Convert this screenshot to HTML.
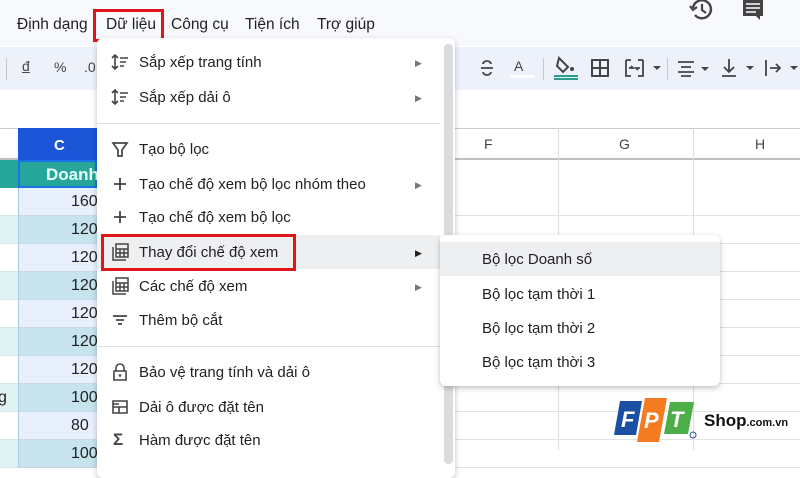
<!DOCTYPE html><html><head><meta charset="utf-8"><style>
*{margin:0;padding:0;box-sizing:border-box}
body{width:800px;height:450px;overflow:hidden;position:relative;background:#fff;font-family:"Liberation Sans",Arial,sans-serif;color:#202124}
.abs{position:absolute}
.menu span{position:absolute;font-size:15.5px}
.row{position:absolute;left:0;width:800px;height:28px;border-bottom:1px solid #e2e2e2}
.it{position:absolute;left:139px;font-size:15px;color:#202124}
.ic{position:absolute;left:111px;width:18px;height:18px}
.arr{position:absolute;left:415px;font-size:9px;color:#777}
.sub{position:absolute;left:482px;font-size:15px}
</style></head><body>
<div class="abs" style="left:0;top:0;width:800px;height:46px;background:#f8f9fc"></div>
<div class="menu">
<span style="left:17px;top:16px">Định dạng</span>
<span style="left:106px;top:16px">Dữ liệu</span>
<span style="left:171px;top:16px">Công cụ</span>
<span style="left:245px;top:16px">Tiện ích</span>
<span style="left:317px;top:16px">Trợ giúp</span>
</div>
<div class="abs" style="left:93px;top:9px;width:71px;height:33px;border:3px solid #e0161b"></div>
<svg class="abs" style="left:688px;top:0" width="28" height="22" viewBox="0 0 28 22"><path d="M5 8a9 9 0 1 1 2 7" fill="none" stroke="#444" stroke-width="2.4"/><path d="M2 6l3 4 4-3" fill="none" stroke="#444" stroke-width="2.2"/><path d="M14 4v6l4 3" fill="none" stroke="#444" stroke-width="2.2"/></svg>
<svg class="abs" style="left:741px;top:0" width="24" height="22" viewBox="0 0 24 22"><path d="M2 0h20v16h-3v4l-4-4H2z" fill="#444"/><path d="M5 4h14M5 8h14M5 12h10" stroke="#fff" stroke-width="1.6"/></svg>
<div class="abs" style="left:0;top:47px;width:800px;height:43px;background:#edf2fa"></div>
<div class="abs" style="left:6px;top:58px;width:1px;height:22px;background:#c7c7c7"></div>
<div class="abs" style="left:22px;top:58px;font-size:14px;color:#444;text-decoration:underline">đ</div>
<div class="abs" style="left:54px;top:59px;font-size:14px;color:#444">%</div>
<div class="abs" style="left:84px;top:59px;font-size:14px;color:#444">.0</div>
<svg class="abs" style="left:478px;top:58px" width="18" height="20"><path d="M3 10h12M5 6a4 3 0 0 1 8 0M5 14a4 3 0 0 0 8 0" fill="none" stroke="#444" stroke-width="1.8"/></svg>
<div class="abs" style="left:514px;top:58px;font-size:14px;color:#444">A</div>
<div class="abs" style="left:510px;top:75px;width:24px;height:3px;background:#fff"></div>
<div class="abs" style="left:543px;top:58px;width:1px;height:22px;background:#c7c7c7"></div>
<svg class="abs" style="left:553px;top:55px" width="26" height="26"><path d="M6 3l9 9-5 5-6-6z" fill="none" stroke="#444" stroke-width="2"/><circle cx="19" cy="14" r="2" fill="#444"/><rect x="1" y="20" width="24" height="2" fill="#2a9d8f"/><rect x="1" y="23" width="24" height="2" fill="#2a9d8f"/></svg>
<svg class="abs" style="left:591px;top:59px" width="18" height="18"><path d="M1 1h16v16H1zM9 1v16M1 9h16" fill="none" stroke="#444" stroke-width="2"/></svg>
<svg class="abs" style="left:625px;top:59px" width="40" height="18"><path d="M1 1h5M1 1v16h5M18 1h-5M18 1v16h-5M4 9h4l-2-2M15 9h-4l2 2" fill="none" stroke="#444" stroke-width="1.8"/><path d="M28 7h8l-4 4z" fill="#444"/></svg>
<div class="abs" style="left:667px;top:58px;width:1px;height:22px;background:#c7c7c7"></div>
<svg class="abs" style="left:677px;top:60px" width="36" height="18"><path d="M1 2h16M4 7h10M1 12h16M4 16h10" stroke="#444" stroke-width="1.8"/><path d="M24 7h8l-4 4z" fill="#444"/></svg>
<svg class="abs" style="left:720px;top:58px" width="36" height="20"><path d="M9 1v12M4 9l5 5 5-5M2 18h14" fill="none" stroke="#444" stroke-width="1.8"/><path d="M26 8h8l-4 4z" fill="#444"/></svg>
<svg class="abs" style="left:764px;top:58px" width="36" height="20"><path d="M2 2v16M6 10h10M12 6l4 4-4 4" fill="none" stroke="#444" stroke-width="1.8"/><path d="M26 8h8l-4 4z" fill="#444"/></svg>
<div class="abs" style="left:0;top:128px;width:800px;height:32px;background:#fff;border-top:1px solid #ccc;border-bottom:2px solid #c0c0c0"></div>
<div class="abs" style="left:18px;top:128px;width:79px;height:32px;background:#1b55d8;color:#fff;font-weight:bold;font-size:15px;padding:9px 0 0 36px">C</div>
<div class="abs" style="left:484px;top:136px;font-size:14px;color:#444">F</div>
<div class="abs" style="left:619px;top:136px;font-size:14px;color:#444">G</div>
<div class="abs" style="left:755px;top:136px;font-size:14px;color:#444">H</div>
<div class="abs" style="left:558px;top:128px;width:1px;height:322px;background:#ddd"></div>
<div class="abs" style="left:693px;top:128px;width:1px;height:322px;background:#ddd"></div>
<div class="abs" style="left:0;top:160px;width:18px;height:28px;background:#26a69a"></div>
<div class="abs" style="left:18px;top:160px;width:79px;height:28px;background:#26a69a;border:2px solid #1a73e8;color:#e8fffb;font-weight:bold;font-size:17px;padding:3px 0 0 26px">Doanh</div>
<div class="row" style="top:188px;border-color:#e2e2e2"></div>
<div id="rows"></div>
<script>
var vals=["160","120","120","120","120","120","120","100","80","100"];
var h="";
for(var i=0;i<10;i++){var t=188+i*28;var odd=i%2==1;
h+='<div class="abs" style="left:0;top:'+t+'px;width:18px;height:28px;background:'+(odd?'#e0f2f1':'#fff')+';border-bottom:1px solid #d6e6e6"></div>';
h+='<div class="abs" style="left:18px;top:'+t+'px;width:79px;height:28px;background:'+(odd?'#c7e3ee':'#e8f0fe')+';border-bottom:1px solid #c8d8e8;border-left:1px solid #a8c8e8;font-size:16px;padding:5px 0 0 52px">'+vals[i]+'</div>';
h+='<div class="abs" style="left:97px;top:'+(t+27)+'px;width:703px;height:1px;background:#e2e2e2"></div>';}
h+='<div class="abs" style="left:-2px;top:389px;font-size:16px">g</div>';
document.getElementById('rows').innerHTML=h;
</script>
<div class="abs" style="left:97px;top:38px;width:358px;height:440px;background:#fff;border-radius:6px;box-shadow:0 2px 6px rgba(0,0,0,.25)"></div>
<div class="abs" style="left:444px;top:44px;width:9px;height:420px;background:#dadce0;border-radius:4px"></div>
<div class="abs" style="left:97px;top:123px;width:343px;height:1px;background:#e0e0e0"></div>
<div class="abs" style="left:97px;top:346px;width:343px;height:1px;background:#e0e0e0"></div>
<div class="abs" style="left:97px;top:235px;width:343px;height:34px;background:#eeeff1"></div>
<div class="abs" style="left:101px;top:234px;width:195px;height:37px;border:3px solid #e0161b"></div>
<svg class="ic" style="top:53px"><path d="M4 2v14M1 5l3-3 3 3M1 13l3 3 3-3M9 5h8M9 9h6M9 13h4" fill="none" stroke="#444" stroke-width="1.6"/></svg>
<div class="it" style="top:54px">Sắp xếp trang tính</div><div class="arr" style="top:58px">▶</div>
<svg class="ic" style="top:88px"><path d="M4 2v14M1 5l3-3 3 3M1 13l3 3 3-3M9 5h8M9 9h6M9 13h4" fill="none" stroke="#444" stroke-width="1.6"/></svg>
<div class="it" style="top:89px">Sắp xếp dải ô</div><div class="arr" style="top:93px">▶</div>
<svg class="ic" style="top:140px"><path d="M2 3h14l-5 7v6h-4v-6z" fill="none" stroke="#444" stroke-width="1.7"/></svg>
<div class="it" style="top:141px">Tạo bộ lọc</div>
<svg class="ic" style="top:175px"><path d="M9 3v12M3 9h12" stroke="#444" stroke-width="1.8"/></svg>
<div class="it" style="top:176px">Tạo chế độ xem bộ lọc nhóm theo</div><div class="arr" style="top:180px">▶</div>
<svg class="ic" style="top:208px"><path d="M9 3v12M3 9h12" stroke="#444" stroke-width="1.8"/></svg>
<div class="it" style="top:209px">Tạo chế độ xem bộ lọc</div>
<svg class="ic" style="top:243px"><path d="M2 4v13h13M5 1h12v13H5zM5 6h12M5 10h12M9 6v8M13 6v8" fill="none" stroke="#444" stroke-width="1.5"/></svg>
<div class="it" style="top:244px">Thay đổi chế độ xem</div><div class="arr" style="top:248px;color:#222">▶</div>
<svg class="ic" style="top:277px"><path d="M2 4v13h13M5 1h12v13H5zM5 6h12M5 10h12M9 6v8M13 6v8" fill="none" stroke="#444" stroke-width="1.5"/></svg>
<div class="it" style="top:278px">Các chế độ xem</div><div class="arr" style="top:282px">▶</div>
<svg class="ic" style="top:311px"><path d="M2 5h14M5 9h8M7 13h4" stroke="#444" stroke-width="1.7"/></svg>
<div class="it" style="top:312px">Thêm bộ cắt</div>
<svg class="ic" style="top:363px"><path d="M3 8h12v9H3zM5 8V5a4 4 0 0 1 8 0v3" fill="none" stroke="#444" stroke-width="1.6"/><circle cx="9" cy="12.5" r="1.3" fill="#444"/></svg>
<div class="it" style="top:364px">Bảo vệ trang tính và dải ô</div>
<svg class="ic" style="top:398px"><path d="M2 3h14v12H2zM2 9h14M8 9v6M2 6h6" fill="none" stroke="#444" stroke-width="1.6"/></svg>
<div class="it" style="top:399px">Dải ô được đặt tên</div>
<div class="abs" style="left:113px;top:430px;font-size:17px;color:#444;font-weight:bold">Σ</div>
<div class="it" style="top:432px">Hàm được đặt tên</div>
<div class="abs" style="left:440px;top:235px;width:280px;height:151px;background:#fff;border-radius:6px;box-shadow:0 2px 6px rgba(0,0,0,.25)"></div>
<div class="abs" style="left:440px;top:242px;width:280px;height:34px;background:#eeeff1"></div>
<div class="sub" style="top:251px">Bộ lọc Doanh số</div>
<div class="sub" style="top:286px">Bộ lọc tạm thời 1</div>
<div class="sub" style="top:320px">Bộ lọc tạm thời 2</div>
<div class="sub" style="top:354px">Bộ lọc tạm thời 3</div>
<svg class="abs" style="left:612px;top:397px" width="88" height="46" viewBox="0 0 88 46">
<path d="M8 4h22l-6 34H2z" fill="#1a4fa3"/><path d="M33 1h22l-8 44H25z" fill="#f47b20"/><path d="M58 5h24l-6 32H52z" fill="#4cae47"/>
<text x="9" y="30" font-family="Liberation Sans" font-weight="bold" font-style="italic" font-size="22" fill="#fff">F</text>
<text x="32" y="31" font-family="Liberation Sans" font-weight="bold" font-style="italic" font-size="22" fill="#fff">P</text>
<text x="58" y="30" font-family="Liberation Sans" font-weight="bold" font-style="italic" font-size="22" fill="#fff">T</text>
<circle cx="81" cy="38" r="3" fill="none" stroke="#1a4fa3" stroke-width="1"/></svg>
<div class="abs" style="left:704px;top:411px;font-weight:bold;font-size:17px;color:#111">Shop<span style="font-size:11px">.com.vn</span></div>
</body></html>
